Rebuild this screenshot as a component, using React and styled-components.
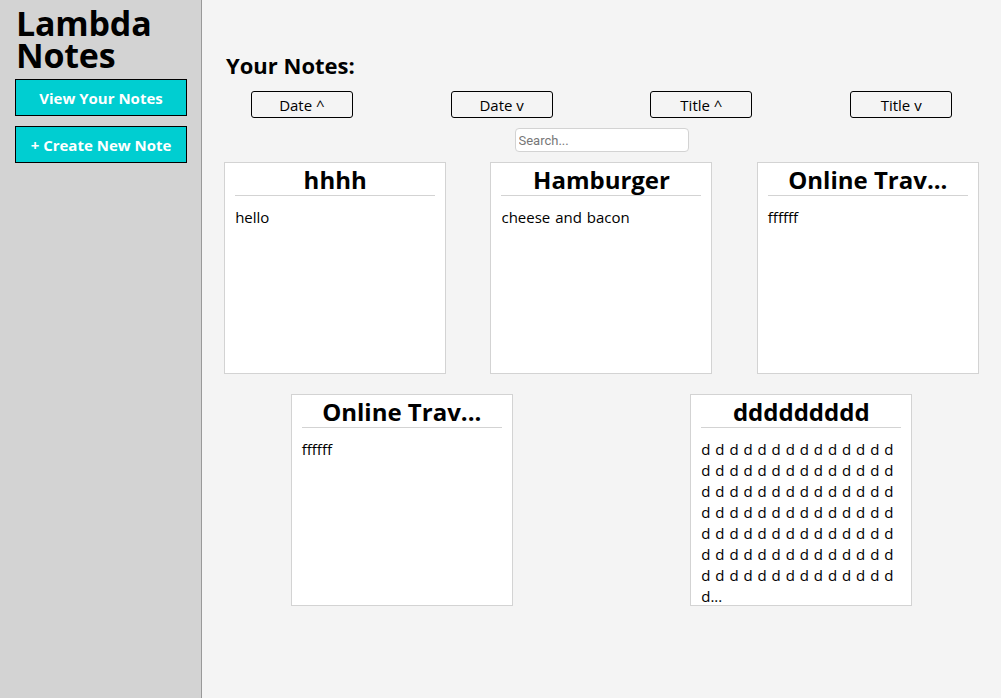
import React from 'react';
import styled, { createGlobalStyle } from 'styled-components';

const GlobalStyle = createGlobalStyle`
  html, body {
    margin: 0;
    padding: 0;
    font-family: "Open Sans", "Noto Sans", "Liberation Sans", sans-serif;
    color: #000;
    background: #f4f4f4;
  }
  * {
    box-sizing: border-box;
  }
`;

const notes = [
  { id: 1, title: 'hhhh', text: 'hello' },
  { id: 2, title: 'Hamburger', text: 'cheese and bacon' },
  { id: 3, title: 'Online Trav...', text: 'ffffff' },
  { id: 4, title: 'Online Trav...', text: 'ffffff' },
  { id: 5, title: 'ddddddddd', text: `${'d '.repeat(99).trim()}...` },
];

const sorts = ['Date ^', 'Date v', 'Title ^', 'Title v'];

const Layout = styled.div`
  display: flex;
  min-height: 100vh;
`;

const Sidebar = styled.nav`
  width: 202px;
  flex-shrink: 0;
  background: #d3d3d3;
  border-right: 1px solid #999;
  padding: 7px 15px 0;
  display: flex;
  flex-direction: column;
  gap: 10px;
`;

const Logo = styled.h1`
  margin: 0 0 -2px 1px;
  font-size: 34px;
  line-height: 32px;
  font-weight: 700;
  letter-spacing: -0.2px;
`;

const NavButton = styled.button`
  width: 172px;
  height: 37px;
  background: #00ced1;
  border: 1px solid #000;
  color: #fff;
  font-family: inherit;
  font-size: 15px;
  font-weight: 700;
  cursor: pointer;
`;

const Main = styled.main`
  flex: 1;
  background: #f4f4f4;
  padding: 50px 0 40px;
  display: flex;
  flex-direction: column;
`;

const Heading = styled.h2`
  margin: 0 0 0 24px;
  font-size: 22px;
  line-height: 30px;
  font-weight: 700;
`;

const SortRow = styled.div`
  display: flex;
  justify-content: space-around;
  margin-top: 11px;
`;

const SortButton = styled.button`
  width: 102px;
  height: 27px;
  background: transparent;
  border: 1px solid #000;
  border-radius: 3px;
  font-family: inherit;
  font-size: 15px;
  color: #000;
  cursor: pointer;
`;

const Search = styled.input`
  align-self: center;
  width: 174px;
  height: 24px;
  margin-top: 10px;
  border: 1px solid #d3d3d3;
  border-radius: 4px;
  background: #fff;
  padding: 0 3px;
  font-family: Roboto, "Liberation Sans", sans-serif;
  font-size: 13px;
  &::placeholder {
    color: #777;
  }
`;

const Grid = styled.div`
  display: flex;
  flex-wrap: wrap;
  justify-content: space-around;
  row-gap: 20px;
  margin-top: 10px;
`;

const Card = styled.div`
  width: 222px;
  height: 212px;
  background: #fff;
  border: 1px solid #d3d3d3;
  padding: 0 10px;
  overflow: hidden;
`;

const CardTitle = styled.h3`
  margin: 0;
  padding-top: 2px;
  font-size: 24px;
  line-height: 30px;
  font-weight: 700;
  text-align: center;
  border-bottom: 1px solid #d3d3d3;
  white-space: nowrap;
`;

const CardText = styled.p`
  margin: 11px 0 0;
  font-size: 15px;
  line-height: 21px;
  word-spacing: 1px;
  overflow-wrap: break-word;
`;

export default function App() {
  return (
    <>
      <GlobalStyle />
      <Layout>
        <Sidebar>
          <Logo>Lambda Notes</Logo>
          <NavButton>View Your Notes</NavButton>
          <NavButton>+ Create New Note</NavButton>
        </Sidebar>
        <Main>
          <Heading>Your Notes:</Heading>
          <SortRow>
            {sorts.map((s) => (
              <SortButton key={s}>{s}</SortButton>
            ))}
          </SortRow>
          <Search placeholder="Search..." />
          <Grid>
            {notes.map((n) => (
              <Card key={n.id}>
                <CardTitle>{n.title}</CardTitle>
                <CardText>{n.text}</CardText>
              </Card>
            ))}
          </Grid>
        </Main>
      </Layout>
    </>
  );
}
